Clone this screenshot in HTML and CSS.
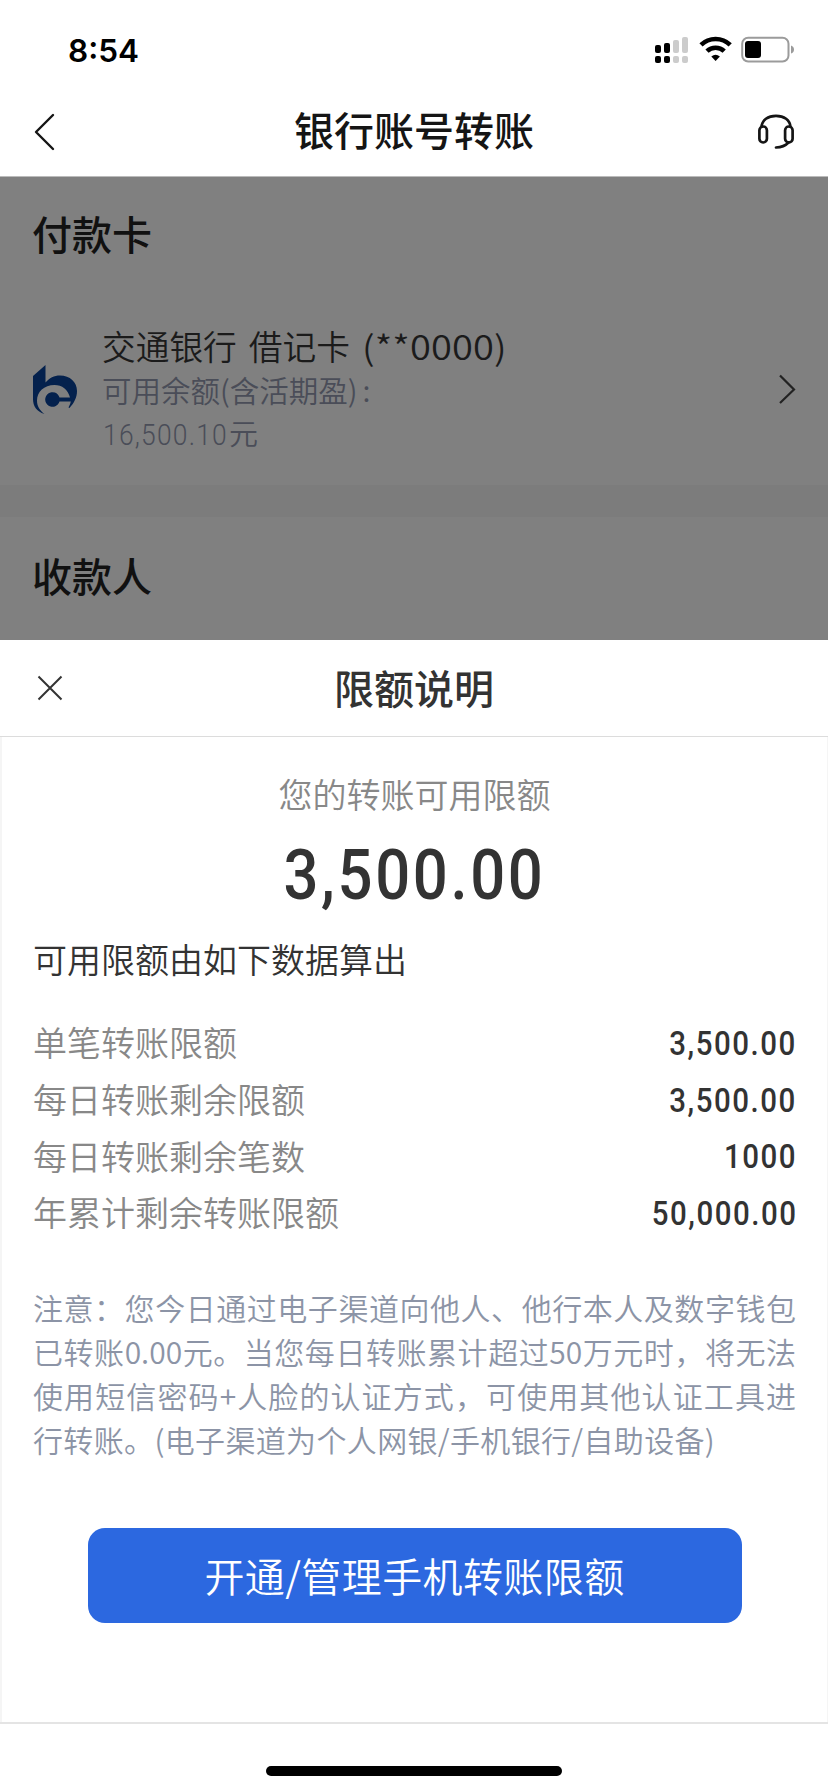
FILE: index.html
```html
<!DOCTYPE html>
<html lang="zh-CN">
<head>
<meta charset="utf-8">
<title>银行账号转账</title>
<link rel="stylesheet" href="styles.css">
</head>
<body>
<div class="phone">
  <header class="top">
    <div class="status">
      <span class="clock">8:54</span>
      <svg class="status-icons" width="144" height="30" viewBox="0 0 144 30">
        <g fill="#000"><rect x="0" y="10" width="6" height="8" rx="2"/><rect x="9" y="8" width="6" height="10" rx="2"/><rect x="0" y="21" width="6" height="7" rx="2"/><rect x="9" y="21" width="6" height="7" rx="2"/></g>
        <g fill="#ccc"><rect x="18" y="5" width="6" height="13" rx="2"/><rect x="27" y="2" width="6" height="16" rx="2"/><rect x="18" y="21" width="6" height="7" rx="2"/><rect x="27" y="21" width="6" height="7" rx="2"/></g>
        <g fill="none" stroke="#000" stroke-width="4.6"><path d="M46 9.900a21 21 0 0 1 29.200 0"/><path d="M52 16.200a12.300 12.300 0 0 1 17.200 0"/></g>
        <path d="M56.300 21.500q4.300-3.600 8.600 0l-4.300 4.500z"/>
        <rect x="87.200" y="2.700" width="46.300" height="23.800" rx="6" fill="none" stroke="#9b9b9b" stroke-width="2"/>
        <rect x="90" y="6" width="16" height="17" rx="3"/>
        <path d="M136 10.500q3 1 3 4t-3 4z" fill="#9b9b9b"/>
      </svg>
    </div>
    <div class="nav">
      <svg class="back" width="24" height="38" viewBox="0 0 24 38"><path d="M20 2 3 19l17 17" fill="none" stroke="#151515" stroke-width="2.400" stroke-linecap="round" stroke-linejoin="round"/></svg>
      <h1 class="nav-title">银行账号转账</h1>
      <svg class="headset" width="38" height="38" viewBox="0 0 38 38" fill="none" stroke="#151515" stroke-width="2.700" stroke-linecap="round"><path d="M4.500 14C5 7 11 2.800 19 2.800S33 7 33.500 14"/><rect x="2.400" y="13.500" width="7.500" height="16" rx="3.700"/><rect x="28.100" y="13.500" width="7.500" height="16" rx="3.700"/><path d="M31.500 29.500Q27 34.200 19 34.500"/></svg>
    </div>
  </header>

  <main class="page">
    <section class="payer">
      <h2 class="section-title">付款卡</h2>
      <div class="card">
        <svg class="logo" width="46" height="50" viewBox="0 0 46 50"><path fill="#04214d" d="M0 11 12.500 0v17.500C16.500 13 21 10.500 27 10.500c10 0 17 6.500 17 15.500 0 6.500-3 12-7.500 17l-1-.5q2-3.500 2.300-6H26.500a7.300 7.300 0 1 1 0-4H37C35 24.500 29 20 21.500 20 11 20 4 27 4 35.500c0 6 3 10 7.500 13.500C3.500 46.500 0 41 0 34z"/></svg>
        <div class="card-text">
          <div class="card-name">交通银行<span class="gap"></span>借记卡<span class="gap"></span><span class="mask">(**0000)</span></div>
          <div class="card-label">可用余额(含活期盈)<span class="colon">:</span></div>
          <div class="card-balance"><span class="amount">16,500.10</span>元</div>
        </div>
        <svg class="more" width="20" height="32" viewBox="0 0 20 32"><path d="M4 2.500l14 14L4 30" fill="none" stroke="#222" stroke-width="2.200"/></svg>
      </div>
    </section>
    <section class="payee"><h2 class="section-title">收款人</h2></section>
  </main>

  <section class="sheet">
    <div class="sheet-head">
      <svg class="close" width="26" height="26" viewBox="0 0 26 26"><path d="M1.500 1.500l23 23m0-23-23 23" stroke="#333" stroke-width="2"/></svg>
      <h2 class="sheet-title">限额说明</h2>
    </div>
    <div class="sheet-body">
      <div class="hero-label">您的转账可用限额</div>
      <div class="hero-value">3,500.00</div>
      <div class="intro">可用限额由如下数据算出</div>
      <dl class="limits">
        <div class="row"><dt>单笔转账限额</dt><dd>3,500.00</dd></div>
        <div class="row"><dt>每日转账剩余限额</dt><dd>3,500.00</dd></div>
        <div class="row"><dt>每日转账剩余笔数</dt><dd>1000</dd></div>
        <div class="row"><dt>年累计剩余转账限额</dt><dd>50,000.00</dd></div>
      </dl>
      <p class="note">
        <span class="line">注意：您今日通过电子渠道向他人、他行本人及数字钱包</span>
        <span class="line">已转账0.00元。当您每日转账累计超过50万元时，将无法</span>
        <span class="line">使用短信密码+人脸的认证方式，可使用其他认证工具进</span>
        <span class="line last">行转账。(电子渠道为个人网银/手机银行/自助设备)</span>
      </p>
      <button class="action">开通/管理手机转账限额</button>
    </div>
    <footer class="home"><div class="home-bar"></div></footer>
  </section>
</div>
</body>
</html>
```
FILE: styles.css
```css
* { box-sizing: border-box; margin: 0; padding: 0; }
body {
  background: #fff;
  font-family: "Noto Sans CJK SC", sans-serif;
  font-weight: 350;
  white-space: nowrap;
}
svg { display: block; }
.phone { width: 828px; height: 1792px; display: flex; flex-direction: column; overflow: hidden; }

.top { height: 177px; background: #fff; border-bottom: 1px solid #bbb; }
.status { height: 88px; padding: 35px 29px 0 68px; display: flex; justify-content: space-between; }
.clock { font: 600 31.500px/31px Inter, sans-serif; }
.nav { height: 88px; padding: 0 33px 0 33px; display: flex; align-items: center; justify-content: space-between; }
.back { margin-right: 14px; }
.nav-title { font-size: 40px; line-height: 60px; padding-bottom: 7px; font-weight: 500; color: #151515; }

.page { height: 463px; background: #7c7c7c; }
.payer { height: 308px; padding: 26px 32px 0; background: #808080; }
.payee { height: 123px; margin-top: 32px; padding: 28px 32px 0; background: #808080; }
.section-title { font-size: 40px; line-height: 60px; font-weight: 500; color: #111; }
.card { margin-top: 61px; display: flex; align-items: center; }
.logo { margin-left: 1px; margin-top: 1px; }
.card-text { margin-left: 23px; flex: 1; }
.card-name { font-size: 33.700px; line-height: 44px; height: 44px; color: #1b1b1b; }
.gap { display: inline-block; width: 12px; }
.mask { display: inline-block; letter-spacing: .1px; transform: scaleX(1.13); transform-origin: left; }
.card-label { font-size: 29.500px; line-height: 42px; height: 42px; color: #4a4d58; }
.colon { margin-left: 5px; }
.card-balance { font-size: 29px; line-height: 44px; height: 44px; color: #4a4d58; }
.amount { display: inline-block; font-family: Roboto, sans-serif; font-size: 30px; letter-spacing: 1.400px; transform: scaleX(.88); transform-origin: left; margin: 0 -16px 0 1px; }

.sheet { flex: 1; background: #fff; color: #333; display: flex; flex-direction: column; }
.sheet-head { height: 97px; padding: 0 37px; border-bottom: 1px solid #dcdcdc; display: grid; grid-template-columns: 26px 1fr 26px; align-items: center; }
.sheet-title { font-size: 40px; line-height: 60px; padding-bottom: 3px; font-weight: 500; text-align: center; }
.sheet-body { height: 985px; padding: 32px 31px 0 31px; border: solid #f5f5f5; border-width: 0 1px 0 2px; }
.hero-label { font-size: 34px; line-height: 50px; color: #888; text-align: center; }
.hero-value { margin-top: 20px; font: 500 70px/72px Roboto, sans-serif; letter-spacing: 3px; text-align: center; transform: scaleX(.88); }
.intro { margin-top: 23px; font-size: 34px; line-height: 50px; }
.limits { margin-top: 30px; }
.row { height: 56.700px; display: flex; justify-content: space-between; align-items: center; }
.row dt { font-size: 34px; line-height: 50px; color: #888; }
.row dd { padding-top: 3px; font: 500 33.500px/50px Roboto, sans-serif; letter-spacing: 1.700px; margin-right: -1px; transform: scaleX(.88); transform-origin: right; }
.note { margin-top: 44px; font-size: 30px; line-height: 44px; color: #8c94a6; }
.line { display: block; width: 763px; text-align: justify; text-align-last: justify; }
.last { text-align-last: left; letter-spacing: .35px; }
.action { display: block; width: 654px; height: 95px; margin: 67px auto 0; border: 0; border-radius: 17px; background: #2c68e0; color: #fff; font: 350 40px/60px "Noto Sans CJK SC", sans-serif; letter-spacing: .4px; padding-bottom: 1px; }
.home { flex: 1; border-top: 2px solid #e4e4e4; padding-top: 42px; }
.home-bar { width: 296px; height: 10px; margin: 0 auto; border-radius: 5px; background: #000; }
```
